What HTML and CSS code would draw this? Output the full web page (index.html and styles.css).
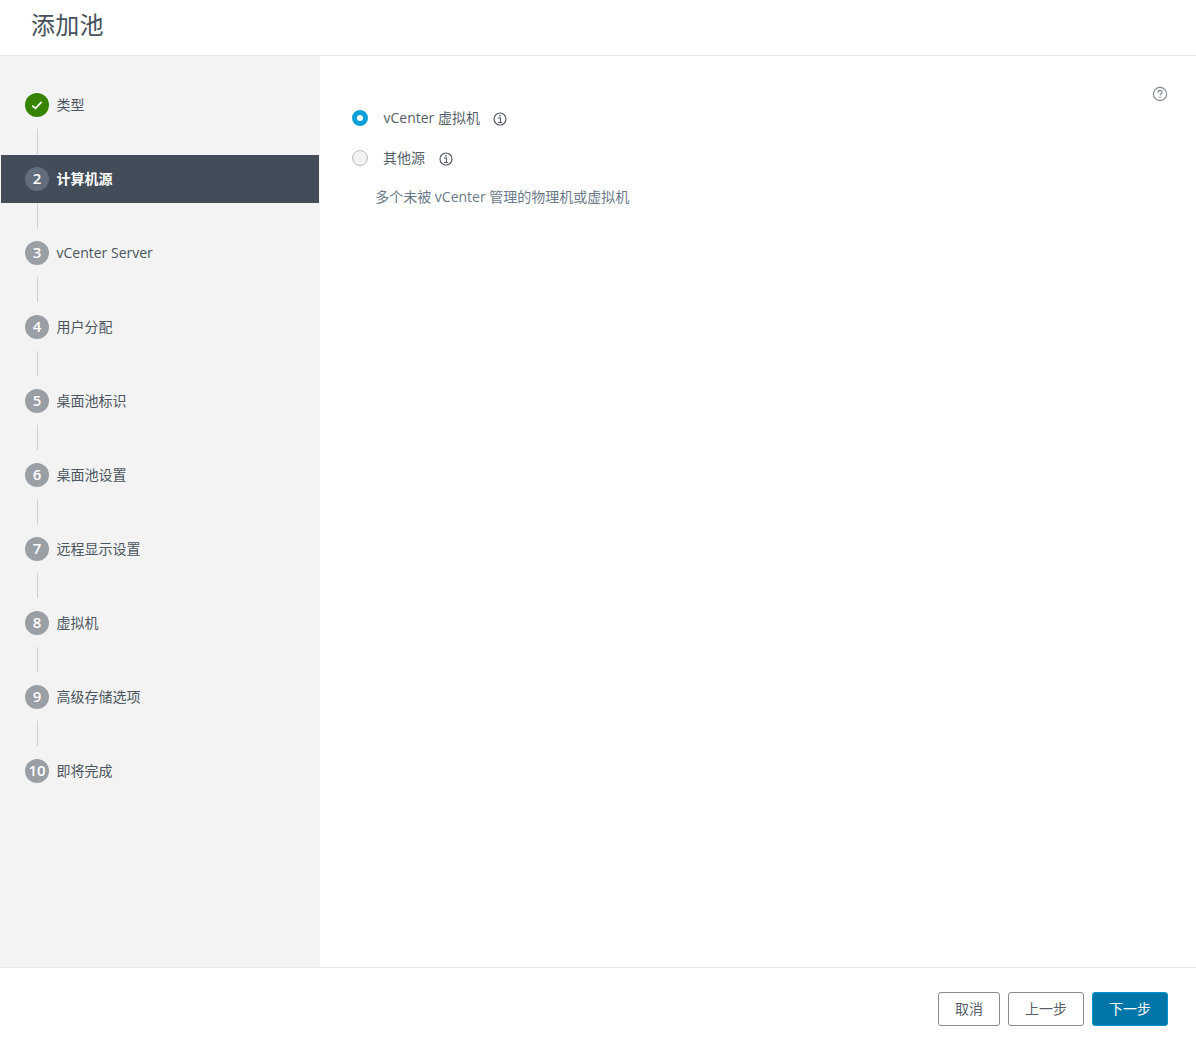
FILE: index.html
```html
<!DOCTYPE html>
<html lang="zh">
<head>
<meta charset="utf-8">
<title>添加池</title>
<link rel="stylesheet" href="styles.css">
</head>
<body>
<div class="dialog">
  <header class="title-bar"><h1 class="title">添加池</h1></header>
  <div class="main">
    <nav class="steps">
      <div class="step">
        <span class="badge badge-done"><svg width="14" height="14" viewBox="0 0 14 14"><path d="M2.3 7.6 L5.5 10.4 L11.7 3.8" fill="none" stroke="#fff" stroke-width="1.7"/></svg></span>
        <span class="step-label">类型</span>
      </div>
      <div class="connector"></div>
      <div class="step step-active"><span class="badge">2</span><span class="step-label">计算机源</span></div>
      <div class="connector"></div>
      <div class="step"><span class="badge">3</span><span class="step-label">vCenter Server</span></div>
      <div class="connector"></div>
      <div class="step"><span class="badge">4</span><span class="step-label">用户分配</span></div>
      <div class="connector"></div>
      <div class="step"><span class="badge">5</span><span class="step-label">桌面池标识</span></div>
      <div class="connector"></div>
      <div class="step"><span class="badge">6</span><span class="step-label">桌面池设置</span></div>
      <div class="connector"></div>
      <div class="step"><span class="badge">7</span><span class="step-label">远程显示设置</span></div>
      <div class="connector"></div>
      <div class="step"><span class="badge">8</span><span class="step-label">虚拟机</span></div>
      <div class="connector"></div>
      <div class="step"><span class="badge">9</span><span class="step-label">高级存储选项</span></div>
      <div class="connector"></div>
      <div class="step"><span class="badge">10</span><span class="step-label">即将完成</span></div>
    </nav>
    <section class="content">
      <div class="help-row">
        <svg class="icon" width="16" height="16" viewBox="0 0 16 16"><circle cx="8" cy="8" r="6.6" fill="none" stroke="#7c868f" stroke-width="1.1"/><path d="M5.9 6.4 C5.9 3.7 10.2 3.7 10.2 6.2 C10.2 7.8 8 7.6 8 9.6" fill="none" stroke="#7c868f" stroke-width="1.1"/><rect x="7.4" y="10.6" width="1.2" height="1.3" fill="#7c868f"/></svg>
      </div>
      <div class="option option-first">
        <span class="radio radio-on"></span>
        <span class="option-label">vCenter 虚拟机</span>
        <svg class="icon" width="14" height="14" viewBox="0 0 14 14"><circle cx="7" cy="7" r="6" fill="none" stroke="#565f69" stroke-width="1.2"/><rect x="6.2" y="3.1" width="1.5" height="1.5" fill="#565f69"/><path d="M5 6 H7.4 V10.2 M4.9 10.5 H9.2" fill="none" stroke="#565f69" stroke-width="1.1"/></svg>
      </div>
      <div class="option">
        <span class="radio"></span>
        <span class="option-label option-label-cjk">其他源</span>
        <svg class="icon" width="14" height="14" viewBox="0 0 14 14"><circle cx="7" cy="7" r="6" fill="none" stroke="#565f69" stroke-width="1.2"/><rect x="6.2" y="3.1" width="1.5" height="1.5" fill="#565f69"/><path d="M5 6 H7.4 V10.2 M4.9 10.5 H9.2" fill="none" stroke="#565f69" stroke-width="1.1"/></svg>
      </div>
      <p class="hint">多个未被 vCenter 管理的物理机或虚拟机</p>
    </section>
  </div>
  <footer class="footer">
    <button class="btn">取消</button>
    <button class="btn btn-wide">上一步</button>
    <button class="btn btn-wide btn-primary">下一步</button>
  </footer>
</div>
</body>
</html>
```
FILE: styles.css
```css
* { box-sizing: border-box; }
html, body { margin: 0; padding: 0; height: 100%; background: #fff; }
body {
  font-family: "Open Sans", "Noto Sans CJK SC", sans-serif;
  font-size: 14px;
  color: #565656;
}
.dialog { display: flex; flex-direction: column; height: 1049px; }
.title-bar {
  height: 56px;
  flex: none;
  border-bottom: 1px solid #e8e8e8;
  padding: 6px 0 0 31px;
}
.title { margin: 0; font-size: 24px; font-weight: 400; line-height: 38px; color: #45515c; letter-spacing: 0.3px; }
.main { flex: 1; display: flex; min-height: 0; }
.steps {
  width: 320px;
  flex: none;
  background: #f3f3f3;
  padding: 25px 1px 0 1px;
}
.step {
  height: 48px;
  display: flex;
  align-items: center;
  padding-left: 24px;
  color: #4a5560;
}
.step-active { background: #434d59; color: #fff; font-weight: 700; }
.badge {
  width: 24px;
  height: 24px;
  border-radius: 50%;
  background: #9a9ea5;
  color: #fff;
  font-size: 15px;
  font-weight: 600;
  line-height: 22px;
  padding-bottom: 2px;
  display: flex;
  align-items: center;
  justify-content: center;
  flex: none;
}
.step-active .badge { background: #616d7b; }
.badge-done { background: #378400; padding-bottom: 0; }
.step-label { margin-left: 7.5px; line-height: 20px; }
.connector { height: 26px; margin-left: 36px; width: 1px; background: #cfcfcf; border-bottom: 1px solid #f3f3f3; }
.content { flex: 1; padding: 30px 28px 0 32px; color: #565656; }
.help-row { display: flex; justify-content: flex-end; height: 16px; }
.option { display: flex; align-items: center; height: 20px; margin-top: 20px; }
.option-first { margin-top: 6px; }
.radio {
  width: 16px;
  height: 16px;
  border-radius: 50%;
  border: 1px solid #b9bec4;
  background: #f2f2f2;
  flex: none;
}
.radio-on { border: 5px solid #0f9fd8; background: #fff; }
.option-label { margin-left: 15.5px; margin-top: -2px; color: #565f69; }
.option-label-cjk { margin-left: 15px; }
.option .icon { margin-left: 13.5px; margin-top: 2px; }
.option-label-cjk + .icon { margin-left: 14px; }
.icon { display: block; }
.hint { margin: 19px 0 0 23.2px; line-height: 20px; color: #6b7a8a; }
.footer {
  height: 82px;
  flex: none;
  border-top: 1px solid #e8e8e8;
  display: flex;
  justify-content: flex-end;
  align-items: flex-start;
  gap: 8px;
  padding: 24px 28px 0 0;
}
.btn {
  width: 62px;
  height: 34px;
  border: 1px solid #8c8c8c;
  border-radius: 3px;
  background: #fff;
  color: #565f69;
  font: inherit;
  font-size: 14px;
  padding: 0 0 2px;
}
.btn-wide { width: 76px; }
.btn-primary { background: #0076a8; border-color: #0094cc; color: #fff; }
```
